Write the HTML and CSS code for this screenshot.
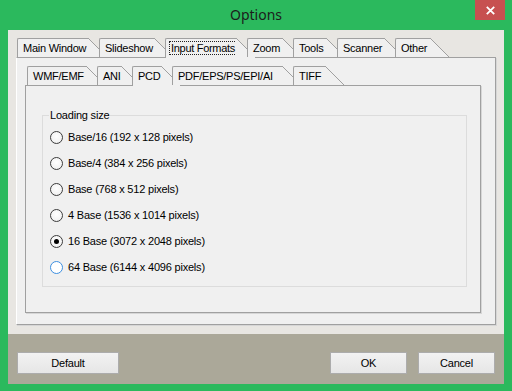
FILE: index.html
```html
<!DOCTYPE html>
<html>
<head>
<meta charset="utf-8">
<title>Options</title>
<link rel="stylesheet" href="styles.css">
</head>
<body>
<div class="window">
  <div class="titlebar">
    <span></span>
    <span class="title">Options</span>
    <button class="close" aria-label="Close">
      <svg width="9" height="9" viewBox="0 0 9 9"><path d="M0.8 0.8 L8.2 8.2 M8.2 0.8 L0.8 8.2" stroke="#fff" stroke-width="1.8" fill="none"/></svg>
    </button>
  </div>
  <div class="client">
    <div class="client-main">
      <div class="tabctl">
        <div class="tabs">
          <div class="tab tab-main">Main Window</div>
          <div class="tab tab-slide">Slideshow</div>
          <div class="tab tab-input tab--active"><span class="focus">Input Formats</span></div>
          <div class="tab tab-zoom">Zoom</div>
          <div class="tab tab-tools">Tools</div>
          <div class="tab tab-scanner">Scanner</div>
          <div class="tab tab-other">Other</div>
        </div>
        <div class="panel panel-outer">
          <div class="tabs tabs-inner">
            <div class="tab tab-wmf">WMF/EMF</div>
            <div class="tab tab-ani">ANI</div>
            <div class="tab tab-pcd tab--active">PCD</div>
            <div class="tab tab-pdf">PDF/EPS/PS/EPI/AI</div>
            <div class="tab tab-tiff">TIFF</div>
          </div>
          <div class="panel panel-inner">
            <fieldset class="group">
              <legend>Loading size</legend>
              <label class="radio"><span class="dot"></span>Base/16 (192 x 128 pixels)</label>
              <label class="radio"><span class="dot"></span>Base/4 (384 x 256 pixels)</label>
              <label class="radio"><span class="dot"></span>Base (768 x 512 pixels)</label>
              <label class="radio"><span class="dot"></span>4 Base (1536 x 1014 pixels)</label>
              <label class="radio"><span class="dot dot--checked"></span>16 Base (3072 x 2048 pixels)</label>
              <label class="radio"><span class="dot dot--hover"></span>64 Base (6144 x 4096 pixels)</label>
            </fieldset>
          </div>
        </div>
      </div>
    </div>
    <div class="footer">
      <button class="btn btn-default">Default</button>
      <button class="btn btn-ok">OK</button>
      <button class="btn btn-cancel">Cancel</button>
    </div>
  </div>
</div>
</body>
</html>
```
FILE: styles.css
```css
html, body {
  margin: 0;
  padding: 0;
  background: #2bb95d;
}
.window {
  width: 512px;
  height: 391px;
  box-sizing: border-box;
  background: #2bb95d;
  padding: 0 8px 7px;
  display: flex;
  flex-direction: column;
  font-family: "Liberation Sans", Arial, sans-serif;
  font-size: 11px;
  letter-spacing: -0.2px;
  color: #000;
}
.titlebar {
  height: 30px;
  margin: 0 -8px;
  display: grid;
  grid-template-columns: 1fr auto 1fr;
  align-items: start;
  letter-spacing: 0;
}
.title {
  font-family: "Noto Sans", sans-serif;
  font-size: 14px;
  line-height: 30px;
  color: #1c1c1c;
}
.close {
  justify-self: end;
  margin: 0 7px 0 0;
  width: 30px;
  height: 20px;
  border: 0;
  padding: 0;
  background: #c75050;
  display: flex;
  align-items: center;
  justify-content: center;
}
.close svg { display: block; }
.client {
  flex: 1;
  display: flex;
  flex-direction: column;
  background: #e8e6e2;
}
.client-main {
  flex: 1;
  padding: 8px 8px 0;
}
.tabs {
  display: flex;
  align-items: flex-start;
  height: 19px;
  position: relative;
  z-index: 1;
  padding-left: 1px;
}
.tabs-inner {
  padding-left: 2px;
}
.tab {
  position: relative;
  flex: none;
  box-sizing: border-box;
  height: 19px;
  border-left: 1px solid #a0a0a0;
  border-top: 1px solid #a0a0a0;
  border-top-left-radius: 2px;
  background: #f0f0f0;
  padding-left: 5px;
  margin-right: 11px;
  line-height: 18px;
  white-space: nowrap;
  letter-spacing: -0.25px;
}
.tab::after {
  content: "";
  position: absolute;
  left: 100%;
  top: -1px;
  width: 19px;
  height: 19px;
  background: linear-gradient(to top right, #f0f0f0 calc(50% - 0.7px), #a0a0a0 calc(50% - 0.7px), #a0a0a0 calc(50% + 0.7px), transparent calc(50% + 0.7px));
}
.tab--active {
  height: 20px;
  margin-bottom: -1px;
}
.tab--active::after {
  width: 20px;
  height: 20px;
}
.tab-input { padding-left: 3px; }
.focus {
  display: inline-block;
  box-sizing: border-box;
  margin-top: 2px;
  height: 14px;
  width: 68px;
  line-height: 12px;
  border: 1px dotted #222;
  text-align: center;
  letter-spacing: -0.3px;
  vertical-align: top;
}
.tab-main { width: 71px; }
.tab-slide { width: 55px; }
.tab-input { width: 71px; }
.tab-zoom { width: 35px; }
.tab-tools { width: 33px; }
.tab-scanner { width: 47px; }
.tab-other { width: 35px; }
.tab-wmf { width: 59px; }
.tab-ani { width: 24px; }
.tab-pcd { width: 29px; }
.tab-pdf { width: 110px; }
.tab-tiff { width: 32px; }

.panel {
  box-sizing: border-box;
  background: #f0f0f0;
  border: 1px solid #a0a0a0;
  box-shadow: 1px 1px 0 #d6d6d6;
}
.panel-outer {
  width: 480px;
  height: 268px;
  border-left-color: #ffffff;
  padding: 8px 0 0 8px;
}
.panel-inner {
  width: 456px;
  height: 228px;
  padding: 23px 0 0 16px;
}
.group {
  width: 425px;
  box-sizing: border-box;
  margin: 0;
  padding: 2px 6px 6px 6px;
  border: 1px solid #dcdcdc;
  border-radius: 0;
  min-width: 0;
}
.group legend {
  padding: 0 1px;
  line-height: 13px;
  font-size: 11px;
}
.radio {
  display: flex;
  align-items: center;
  height: 26px;
  gap: 5px;
  white-space: nowrap;
}
.dot {
  flex: none;
  box-sizing: border-box;
  width: 13px;
  height: 13px;
  margin-left: 1px;
  border-radius: 50%;
  border: 1px solid #3c3c3c;
  background: radial-gradient(circle at 50% 40%, #ffffff 0%, #f4f4f4 60%, #e6e6e6 100%);
  display: flex;
  align-items: center;
  justify-content: center;
}
.dot--checked::before {
  content: "";
  width: 5px;
  height: 5px;
  border-radius: 50%;
  background: #000;
}
.dot--hover {
  border-color: #3d8fe0;
  background: #ffffff;
}
.footer {
  height: 50px;
  box-sizing: border-box;
  background: #aba899;
  display: flex;
  align-items: flex-start;
  padding: 18px 9px 0;
  gap: 11px;
}
.btn {
  height: 22px;
  box-sizing: border-box;
  border: 1px solid #acacac;
  background: linear-gradient(#f2f2f2, #e6e6e6);
  font-family: "Liberation Sans", Arial, sans-serif;
  font-size: 11px;
  letter-spacing: -0.2px;
  color: #000;
  padding: 0;
}
.btn-default { width: 102px; }
.btn-ok { width: 77px; margin-left: auto; }
.btn-cancel { width: 77px; }
```
